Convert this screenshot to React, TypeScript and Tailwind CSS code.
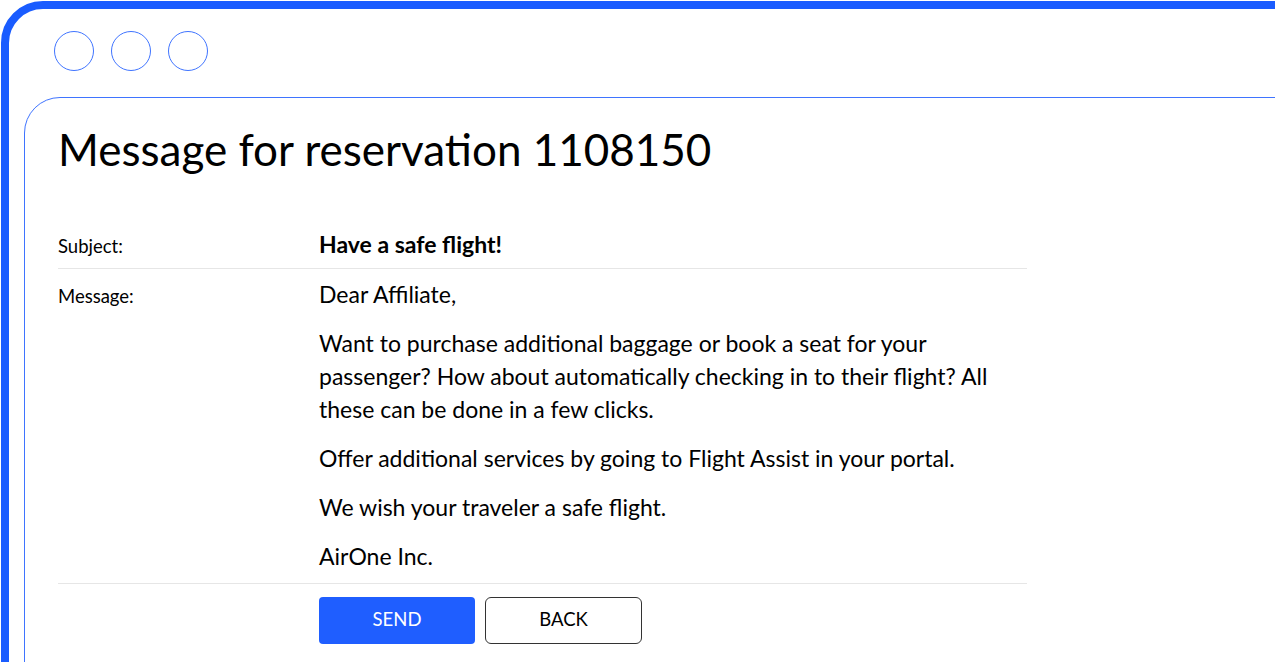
import React from "react";

export default function App() {
  const font = { fontFamily: "Lato, 'Noto Sans', sans-serif" };
  return (
    <div className="w-[1280px] h-[668px] bg-white">
      <div className="w-[1275px] h-[662px] overflow-hidden bg-white" style={font}>
        <div className="mt-[1px] ml-[1px] w-[1320px] h-[720px] border-[8px] border-[#1a5cff] rounded-tl-[42px] bg-white">
          <div className="flex gap-[17px] pl-[45px] pt-[22px]">
            <div className="w-[40px] h-[40px] rounded-full border-[1.5px] border-[#3f74ff]" />
            <div className="w-[40px] h-[40px] rounded-full border-[1.5px] border-[#3f74ff]" />
            <div className="w-[40px] h-[40px] rounded-full border-[1.5px] border-[#3f74ff]" />
          </div>
          <div className="mt-[26px] ml-[15px] h-[700px] border-[1.5px] border-[#3f74ff] rounded-tl-[36px] pl-[33px] pt-[23px] text-black">
            <h1 className="text-[44px] leading-[56px] font-normal">Message for reservation 1108150</h1>
            <div className="w-[969px] mt-[45px]">
              <div className="flex items-baseline pt-[8px] pb-[7px] border-b border-[#e6e6e6]">
                <div className="w-[261px] text-[18.5px]">Subject:</div>
                <div className="text-[23px] leading-[28px] font-bold">Have a safe flight!</div>
              </div>
              <div className="flex items-baseline pt-[9px] pb-[10px] border-b border-[#e6e6e6]">
                <div className="w-[261px] text-[18.5px]">Message:</div>
                <div className="w-[708px] text-[23px] leading-[33px] flex flex-col gap-[16px]">
                  <p>Dear Affiliate,</p>
                  <p>
                    Want to purchase additional baggage or book a seat for your
                    <br />
                    passenger? How about automatically checking in to their flight? All
                    <br />
                    these can be done in a few clicks.
                  </p>
                  <p>Offer additional services by going to Flight Assist in your portal.</p>
                  <p>We wish your traveler a safe flight.</p>
                  <p>AirOne Inc.</p>
                </div>
              </div>
              <div className="flex gap-[10px] pl-[261px] mt-[13px]">
                <button className="w-[156px] h-[47px] rounded-[4px] bg-[#1f5eff] text-white text-[18.5px]">SEND</button>
                <button className="w-[157px] h-[47px] rounded-[6px] border-[1.5px] border-[#333] text-black text-[18.5px]">BACK</button>
              </div>
            </div>
          </div>
        </div>
      </div>
    </div>
  );
}
